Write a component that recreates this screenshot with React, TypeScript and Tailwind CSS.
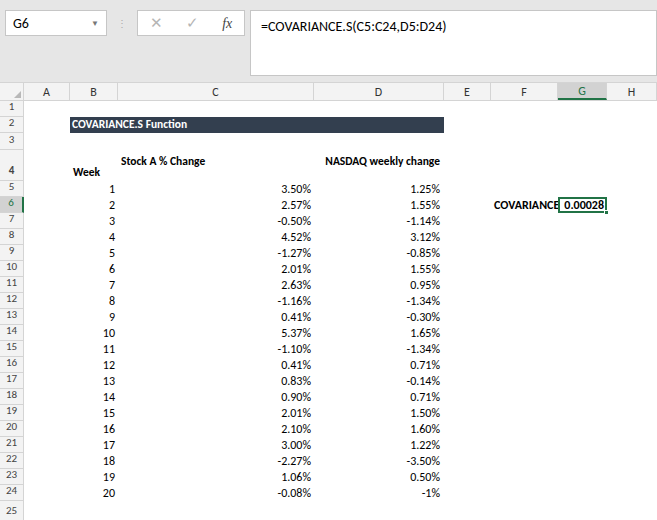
import React from "react";

const cols = [
  { k: "A", w: 46 },
  { k: "B", w: 48 },
  { k: "C", w: 196 },
  { k: "D", w: 130 },
  { k: "E", w: 47 },
  { k: "F", w: 67 },
  { k: "G", w: 49 },
  { k: "H", w: 50 },
];

const data: [string, string, string][] = [
  ["1", "3.50%", "1.25%"], ["2", "2.57%", "1.55%"], ["3", "-0.50%", "-1.14%"],
  ["4", "4.52%", "3.12%"], ["5", "-1.27%", "-0.85%"], ["6", "2.01%", "1.55%"],
  ["7", "2.63%", "0.95%"], ["8", "-1.16%", "-1.34%"], ["9", "0.41%", "-0.30%"],
  ["10", "5.37%", "1.65%"], ["11", "-1.10%", "-1.34%"], ["12", "0.41%", "0.71%"],
  ["13", "0.83%", "-0.14%"], ["14", "0.90%", "0.71%"], ["15", "2.01%", "1.50%"],
  ["16", "2.10%", "1.60%"], ["17", "3.00%", "1.22%"], ["18", "-2.27%", "-3.50%"],
  ["19", "1.06%", "0.50%"], ["20", "-0.08%", "-1%"],
];

function RowHead({ n, h, active }: { n: number; h: string; active?: boolean }) {
  return (
    <div className={`w-[24px] ${h} shrink-0 flex items-end justify-center pb-[1px] border-b border-r border-[#d4d4d4] text-[11px] ${active ? "bg-[#d2d2d2] text-[#217346] border-r-2 border-r-[#217346]" : "bg-[#f3f3f3] text-[#444]"}`}>
      {n}
    </div>
  );
}

export default function App() {
  return (
    <div className="w-[657px] h-[520px] bg-white overflow-hidden text-[12px] text-black" style={{ fontFamily: "Carlito, 'Liberation Sans', sans-serif" }}>
      <div className="h-[83px] bg-[#e6e6e6] flex pt-[10px] pl-[5px] border-b border-[#d4d4d4]">
        <div className="w-[102px] h-[26px] bg-white border border-[#c6c6c6] flex items-center justify-between px-[7px] text-[14px]">
          <span>G6</span>
          <span className="text-[#777] text-[8px]">▼</span>
        </div>
        <div className="w-[30px] flex justify-center pt-[6px] text-[#aaa] text-[10px]">⋮</div>
        <div className="w-[108px] h-[26px] bg-white border border-[#c6c6c6] flex items-center justify-around text-[#b5b5b5] text-[15px]">
          <span>✕</span>
          <span>✓</span>
          <span className="text-[#444] italic text-[14px]" style={{ fontFamily: "'Liberation Serif', serif" }}>fx</span>
        </div>
        <div className="ml-[5px] flex-1 h-[66px] bg-white border border-[#c6c6c6] px-[10px] pt-[5px] text-[14px]">
          =COVARIANCE.S(C5:C24,D5:D24)
        </div>
      </div>
      <div className="flex h-[18px] bg-[#f3f3f3] border-b border-[#d4d4d4] text-[12px] text-[#333]">
        <div className="w-[24px] border-r border-[#d4d4d4] flex items-end justify-end p-[2px]">
          <div className="w-0 h-0 border-l-[7px] border-l-transparent border-b-[7px] border-b-[#b8b8b8]" />
        </div>
        {cols.map((c) => (
          <div key={c.k} style={{ width: c.w }} className={`shrink-0 flex items-center justify-center border-r border-[#d4d4d4] ${c.k === "G" ? "bg-[#d2d2d2] text-[#217346] border-b-2 border-b-[#217346]" : ""}`}>
            {c.k}
          </div>
        ))}
      </div>
      <div className="flex h-[16px]"><RowHead n={1} h="h-[16px]" /></div>
      <div className="flex h-[16px]">
        <RowHead n={2} h="h-[16px]" />
        <div className="w-[46px]" />
        <div className="w-[374px] bg-[#333f4f] text-white font-bold text-[11.5px] flex items-center pl-[2px]">COVARIANCE.S Function</div>
      </div>
      <div className="flex h-[17px]"><RowHead n={3} h="h-[17px]" /></div>
      <div className="flex h-[31px] font-bold text-[11.5px]">
        <RowHead n={4} h="h-[31px]" />
        <div className="w-[46px]" />
        <div className="w-[48px] flex items-end pl-[3px]">Week</div>
        <div className="w-[196px] pl-[3px] pt-[3px]">Stock A % Change</div>
        <div className="w-[130px] text-right pr-[4px] pt-[3px]">NASDAQ weekly change</div>
      </div>
      {data.map((r, i) => (
        <div key={i} className="flex h-[16px] text-[12px]">
          <RowHead n={i + 5} h="h-[16px]" active={i === 1} />
          <div className="w-[46px]" />
          <div className="w-[48px] text-right pr-[3px] leading-[16px]">{r[0]}</div>
          <div className="w-[196px] text-right pr-[3px] leading-[16px]">{r[1]}</div>
          <div className="w-[130px] text-right pr-[4px] leading-[16px]">{r[2]}</div>
          {i === 1 && (
            <>
              <div className="w-[47px]" />
              <div className="w-[67px] leading-[16px] pl-[3px] font-bold overflow-visible whitespace-nowrap">COVARIANCE</div>
              <div className="relative w-[49px] border-2 border-[#217346] font-bold text-right pr-[1px] leading-[12px]">
                0.00028
                <div className="absolute right-[-4px] bottom-[-4px] w-[5px] h-[5px] bg-[#217346] border border-white" />
              </div>
            </>
          )}
        </div>
      ))}
      <div className="flex h-[20px]"><RowHead n={25} h="h-[20px]" /></div>
    </div>
  );
}
